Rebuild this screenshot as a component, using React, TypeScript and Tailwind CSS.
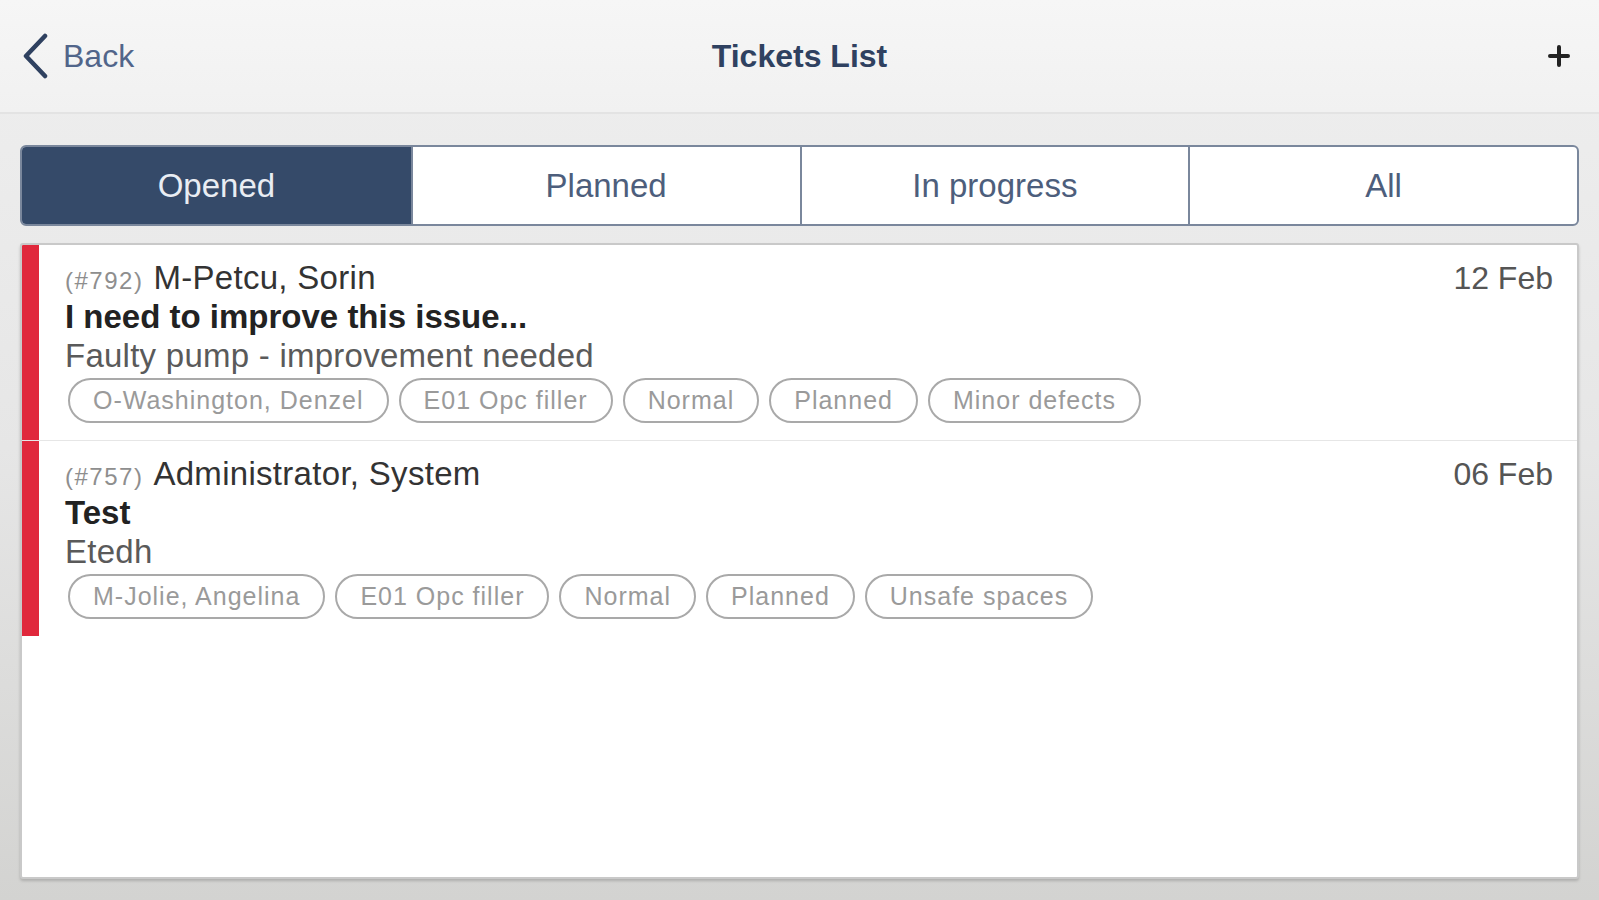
import React from "react";

type Ticket = {
  id: string;
  name: string;
  title: string;
  desc: string;
  date: string;
  tags: string[];
};

const tickets: Ticket[] = [
  {
    id: "(#792)",
    name: "M-Petcu, Sorin",
    title: "I need to improve this issue...",
    desc: "Faulty pump - improvement needed",
    date: "12 Feb",
    tags: ["O-Washington, Denzel", "E01 Opc filler", "Normal", "Planned", "Minor defects"],
  },
  {
    id: "(#757)",
    name: "Administrator, System",
    title: "Test",
    desc: "Etedh",
    date: "06 Feb",
    tags: ["M-Jolie, Angelina", "E01 Opc filler", "Normal", "Planned", "Unsafe spaces"],
  },
];

const segments = ["Opened", "Planned", "In progress", "All"];

function Row({ t, last }: { t: Ticket; last: boolean }) {
  return (
    <div className={"flex " + (last ? "" : "border-b border-[#e6e6e6]")}>
      <div className="w-[17px] shrink-0 bg-[#e0283c]" />
      <div className="flex-1 pl-[26px] pr-[24px] pt-[13px] pb-[17px]">
        <div className="flex items-center justify-between h-[39px]">
          <div className="flex items-baseline">
            <span className="text-[24px] tracking-[1.5px] text-[#8e8e8e]">{t.id}</span>
            <span className="text-[33px] tracking-[0.3px] text-[#333333] ml-[10px]">{t.name}</span>
          </div>
          <span className="text-[32px] text-[#555555]">{t.date}</span>
        </div>
        <div className="h-[39px] flex items-center text-[33px] font-bold text-[#222222]">{t.title}</div>
        <div className="h-[39px] flex items-center text-[33px] tracking-[0.25px] text-[#5a5a5a]">{t.desc}</div>
        <div className="flex gap-[10px] mt-[3px] ml-[3px]">
          {t.tags.map((g, i) => (
            <span
              key={i}
              className="h-[45px] px-[23px] flex items-center border-2 border-[#a9a9a9] rounded-full text-[25px] tracking-[1px] text-[#9a9a9a] whitespace-nowrap"
            >
              {g}
            </span>
          ))}
        </div>
      </div>
    </div>
  );
}

export default function App() {
  return (
    <div
      className="w-[1599px] h-[900px] flex flex-col bg-gradient-to-b from-[#efefef] via-[#e6e6e6] to-[#d3d3d1] overflow-hidden"
      style={{ fontFamily: '"Liberation Sans", Arial, sans-serif' }}
    >
      <header className="relative h-[114px] shrink-0 flex items-center justify-center bg-gradient-to-b from-[#f6f6f6] to-[#f1f1f1] border-b-2 border-[#e3e3e3]">
        <div className="absolute left-[21px] top-0 h-full flex items-center">
          <svg width="28" height="46" viewBox="0 0 28 46" fill="none">
            <path d="M24 3 L5 23 L24 43" stroke="#2f4160" strokeWidth="4.5" strokeLinecap="round" strokeLinejoin="round" />
          </svg>
          <span className="ml-[14px] text-[32px] text-[#51658a]">Back</span>
        </div>
        <h1 className="text-[32px] font-bold text-[#2f4160]">Tickets List</h1>
        <div className="absolute right-[29px] top-0 h-full flex items-center">
          <svg width="22" height="22" viewBox="0 0 22 22">
            <path d="M11 2 V20 M2 11 H20" stroke="#222" strokeWidth="4" strokeLinecap="round" />
          </svg>
        </div>
      </header>

      <main className="flex-1 flex flex-col px-[20px] pt-[31px] pb-[21px]">
        <div className="h-[81px] grid grid-cols-4 border-2 border-[#7a879c] rounded-[6px] overflow-hidden bg-white">
          {segments.map((s, i) => (
            <div
              key={s}
              className={
                "flex items-center justify-center text-[33px] " +
                (i === 0 ? "bg-[#354a69] text-[#e9edf3] " : "text-[#4d5e7c] ") +
                (i > 0 ? "border-l-2 border-[#7a879c]" : "")
              }
            >
              {s}
            </div>
          ))}
        </div>

        <div className="mt-[17px] flex-1 bg-white border-2 border-[#c9c9c9] rounded-[3px] shadow-[0_2px_3px_rgba(0,0,0,0.18)] overflow-hidden">
          {tickets.map((t, i) => (
            <Row key={t.id} t={t} last={i === tickets.length - 1} />
          ))}
        </div>
      </main>
    </div>
  );
}
